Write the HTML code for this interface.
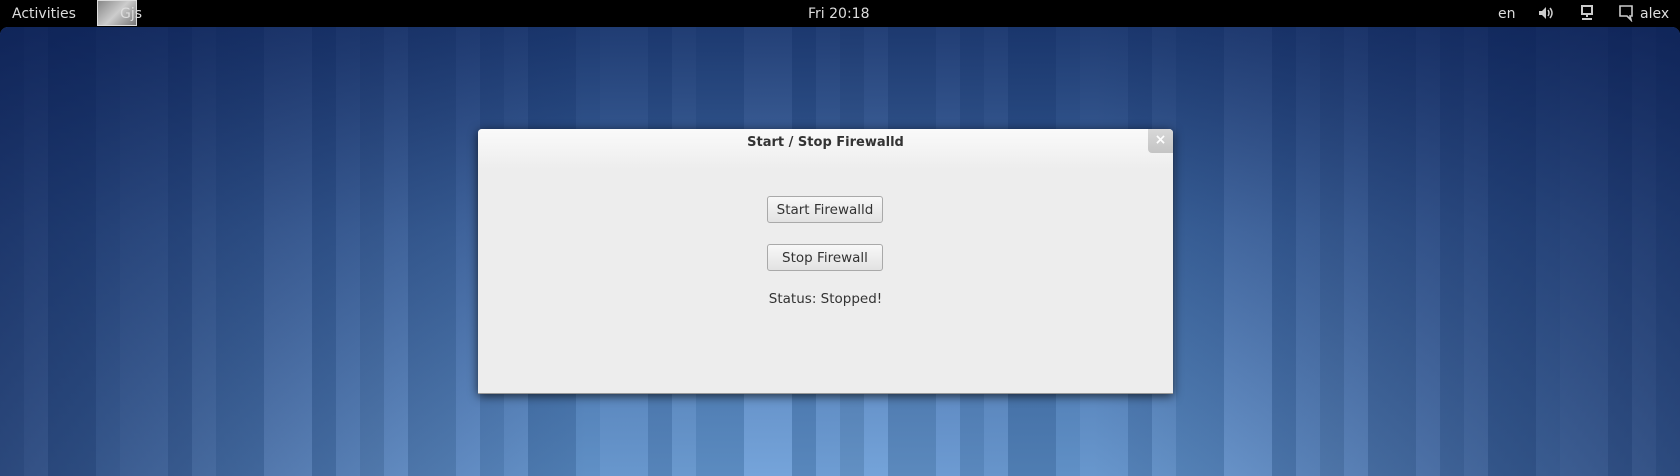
<!DOCTYPE html>
<html><head><meta charset="utf-8"><style>
*{margin:0;padding:0;box-sizing:border-box}
body{width:1680px;height:476px;overflow:hidden;background:#000;font-family:"DejaVu Sans","Liberation Sans",sans-serif;position:relative}
#panel{position:absolute;left:0;top:0;width:1680px;height:27px;background:#000;color:#ddd;font-size:14px}
#panel span{position:absolute;top:6px;color:#ddd}
#desk{position:absolute;left:0;top:27px;width:1680px;height:449px;border-radius:8px 8px 0 0;overflow:hidden;
background:repeating-linear-gradient(90deg,
#5a88bd 0 24px,#6795cb 24px 48px,#4f7db2 48px 96px,#6090c6 96px 120px,#6897cd 120px 168px,#5684b9 168px 192px,#6a99ce 192px 216px,#5b8bc0 216px 264px,#75a4da 264px 312px,#5887bc 312px 336px,#6e9dd3 336px 360px,#6290c3 360px 384px,#74a3d9 384px 408px,#5b89bd 408px 456px,#6d9bd2 456px 480px)}
#shade{position:absolute;inset:0;background:
linear-gradient(180deg,rgba(8,30,85,.75) 0%,rgba(12,40,100,.4) 45%,rgba(10,40,100,0) 100%)}
#shade2{position:absolute;inset:0;background:linear-gradient(90deg,rgba(5,20,70,.55) 0%,rgba(5,20,70,0) 35%,rgba(5,20,70,0) 65%,rgba(5,20,70,.55) 100%)}
#win{position:absolute;left:478px;top:129px;width:695px;height:265px;background:#ededed;border-radius:4px 4px 0 0;box-shadow:0 2px 10px rgba(0,0,0,.7);border-bottom:1px solid #999}
#title{height:40px;background:linear-gradient(#fafafa,#ededed);border-radius:4px 4px 0 0;text-align:center;font-weight:bold;font-size:13px;color:#333;padding-top:6px}
#close{position:absolute;right:0;top:0;width:25px;height:24px;background:linear-gradient(#d8d8d8,#c4c4c4);border-radius:0 4px 0 4px;color:#fff;font-weight:bold;font-size:14px;text-align:center;line-height:22px}
.btn{position:absolute;left:289px;width:116px;height:27px;border:1px solid #a9a9a9;border-radius:3px;background:linear-gradient(#f8f8f8,#e2e2e2);font-size:13.5px;color:#333;text-align:center;line-height:27px}
#status{position:absolute;left:0;width:100%;top:162px;text-align:center;font-size:13.5px;color:#333}
</style></head><body>
<div id="panel">
<span style="left:12px">Activities</span>
<div style="position:absolute;left:97px;top:0;width:40px;height:26px;background:linear-gradient(135deg,#888,#ccc 50%,#777);border:1px solid #ddd"></div>
<span style="left:120px">Gjs</span>
<span style="left:808px">Fri 20:18</span>
<span style="left:1498px">en</span>
<svg style="position:absolute;left:1538px;top:6px" width="16" height="14" viewBox="0 0 16 14"><path d="M1 5h3l4-4v12l-4-4H1z" fill="#ccc"/><path d="M10 4q2 3 0 6M12 2q4 5 0 10" stroke="#ccc" stroke-width="1.5" fill="none"/></svg>
<svg style="position:absolute;left:1580px;top:5px" width="14" height="16" viewBox="0 0 14 16"><rect x="2" y="1" width="10" height="8" fill="none" stroke="#ccc" stroke-width="2"/><path d="M7 9v3M2 14h10" stroke="#ccc" stroke-width="2"/></svg>
<svg style="position:absolute;left:1618px;top:5px" width="17" height="17" viewBox="0 0 17 17"><path d="M2 1h12v10h-2l1 4-4-4H2z" fill="none" stroke="#ccc" stroke-width="1.6"/></svg>
<span style="left:1640px">alex</span>
</div>
<div id="desk"><div id="shade"></div><div id="shade2"></div></div>
<div id="win">
<div id="title">Start / Stop Firewalld</div>
<div id="close">×</div>
<div class="btn" style="top:67px">Start Firewalld</div>
<div class="btn" style="top:115px">Stop Firewall</div>
<div id="status">Status: Stopped!</div>
</div>
</body></html>
